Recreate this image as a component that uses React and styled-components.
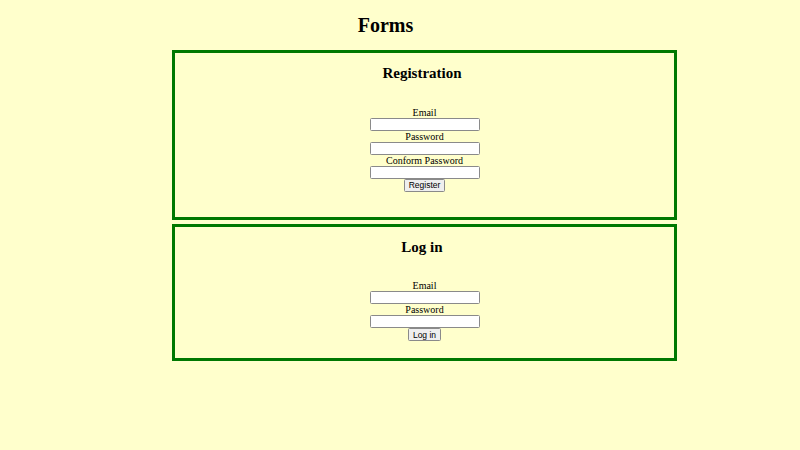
import styled, { createGlobalStyle } from "styled-components";

const GlobalStyle = createGlobalStyle`
  html, body {
    background-color: #ffffcc;
  }
  body {
    margin: 0;
    padding: 0 5px;
    font-family: "Liberation Serif", "Times New Roman", serif;
    color: #000;
  }
`;

const Page = styled.div`
  padding-top: 13.5px;
`;

const Title = styled.h1`
  margin: 0 0 13.5px;
  padding-right: 29px;
  font-size: 20px;
  line-height: 23px;
  font-weight: bold;
  text-align: center;
`;

const Panel = styled.section`
  width: 505px;
  box-sizing: border-box;
  margin: 0 0 4px 167px;
  border: 3px solid #007800;
  padding-bottom: ${(props) => props.bottom}px;
  text-align: center;
`;

const PanelTitle = styled.h2`
  margin: 12px 0 0;
  padding-right: 5px;
  font-size: 15px;
  line-height: 17px;
  font-weight: bold;
`;

const Form = styled.form`
  display: flex;
  flex-direction: column;
  align-items: center;
  padding-top: 24.5px;
`;

const Label = styled.label`
  display: block;
  font-size: 10px;
  line-height: 11px;
`;

const Input = styled.input`
  display: block;
  box-sizing: border-box;
  width: 110px;
  height: 13px;
  margin: 0;
  padding: 0 2px;
  border: 1px solid #8a8a8a;
  border-radius: 1.5px;
  background: #fff;
  font-family: "Liberation Sans", Arial, sans-serif;
  font-size: 8px;
`;

const Button = styled.button`
  box-sizing: border-box;
  height: 13px;
  margin: 0;
  padding: 0 4px;
  border: 1px solid #8a8a8a;
  border-radius: 1.5px;
  background: #efefef;
  font-family: "Liberation Sans", Arial, sans-serif;
  font-size: 8.5px;
  line-height: 10px;
  color: #000;
`;

function Field({ label, type = "text" }) {
  return (
    <>
      <Label>{label}</Label>
      <Input type={type} />
    </>
  );
}

export default function App() {
  return (
    <>
      <GlobalStyle />
      <Page>
        <Title>Forms</Title>

        <Panel bottom={25}>
          <PanelTitle>Registration</PanelTitle>
          <Form onSubmit={(e) => e.preventDefault()}>
            <Field label="Email" type="email" />
            <Field label="Password" type="password" />
            <Field label="Conform Password" type="password" />
            <Button type="submit">Register</Button>
          </Form>
        </Panel>

        <Panel bottom={16.5}>
          <PanelTitle>Log in</PanelTitle>
          <Form onSubmit={(e) => e.preventDefault()}>
            <Field label="Email" type="email" />
            <Field label="Password" type="password" />
            <Button type="submit">Log in</Button>
          </Form>
        </Panel>
      </Page>
    </>
  );
}
